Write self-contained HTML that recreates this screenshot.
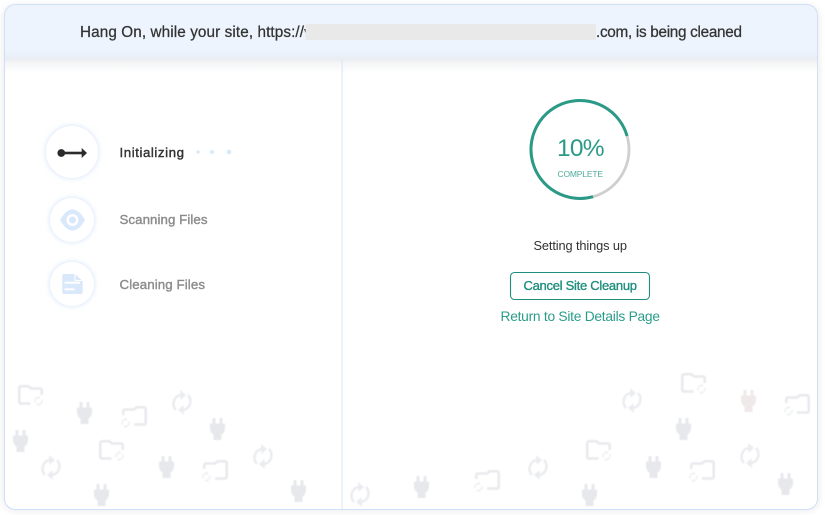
<!DOCTYPE html>
<html><head><meta charset="utf-8"><title>Site Cleanup</title>
<style>
html,body{margin:0;padding:0;background:#fff;width:825px;height:515px;overflow:hidden}
svg{display:block}
text{font-family:"Liberation Sans",Arial,sans-serif}
.c{filter:drop-shadow(0 0 3px rgba(170,200,240,.55))}
</style></head><body>
<svg width="825" height="515" viewBox="0 0 825 515" xmlns="http://www.w3.org/2000/svg">
<defs>
<filter id="ps" x="-5%" y="-5%" width="110%" height="110%"><feGaussianBlur stdDeviation="4"/></filter>
<filter id="soft" x="0" y="0" width="825" height="515" filterUnits="userSpaceOnUse"><feGaussianBlur stdDeviation=".4"/></filter>
<linearGradient id="sh" x1="0" y1="0" x2="0" y2="1"><stop offset="0" stop-color="#e9ebef"/><stop offset=".35" stop-color="#f5f6f7"/><stop offset="1" stop-color="#fff"/></linearGradient>
<linearGradient id="hb" x1="0" y1="0" x2="0" y2="1"><stop offset="0" stop-color="#edf4fd"/><stop offset="1" stop-color="#e9eef6"/></linearGradient>
<clipPath id="pc"><rect x="4.500" y="4.500" width="813" height="505" rx="11"/></clipPath>
<g id="plug" fill="#e7e8ec">
<rect x="2.500" y="0" width="3" height="7"/><rect x="9.500" y="0" width="3" height="7"/>
<path d="M0 5.500H15V9.500C15 13.500 13.500 15.500 11.500 16.500V22H3.500V16.500C1.500 15.500 0 13.500 0 9.500Z"/>
</g>
<g id="sync" fill="none" stroke="#ebecf0" stroke-width="2.500">
<path d="M4 20C-1 14.500 2 6 9 5"/>
<path d="M16 5C21 10.500 18 19 11 20"/>
<path d="M8 0L14 5L8.500 10Z" fill="#ebecf0" stroke="none"/>
<path d="M12 25L6 20L11.500 15Z" fill="#ebecf0" stroke="none"/>
</g>
<g id="mini" fill="none" stroke="#eef0f2" stroke-width="1.500">
<path d="M-3.200 1.500C-4.300-1.500-2-3.600.3-3.600"/>
<path d="M3.200-1.500C4.300 1.500 2 3.600-.3 3.600"/>
<path d="M-.3-5.600L2.200-3.600L-.3-1.600Z" fill="#eef0f2" stroke="none"/>
<path d="M.3 5.600L-2.200 3.600L.3 1.600Z" fill="#eef0f2" stroke="none"/>
</g>
<g id="folder">
<path d="M12.500 18.500H3Q1.300 18.500 1.300 16.500V3Q1.300 1.300 3 1.300H10.500L13 3.500H22Q23.700 3.500 23.700 5.500V10" fill="none" stroke="#e9eaee" stroke-width="2.600"/>
<use href="#mini" x="20.500" y="16"/>
</g>
<g id="folder2">
<path d="M13 18.500H23Q24.700 18.500 24.700 16.500V3Q24.700 1.300 23 1.300H15.500L13 3.500H4Q2.300 3.500 2.300 5.500V9" fill="none" stroke="#e9eaee" stroke-width="2.600"/>
<use href="#mini" x="4.500" y="17"/>
</g>
</defs>

<!-- panel -->
<rect x="4" y="6" width="814" height="504" rx="11" fill="#000" opacity=".1" filter="url(#ps)"/>
<rect x="4.500" y="4.500" width="813" height="505" rx="11" fill="#fff"/>
<g clip-path="url(#pc)">
<rect x="0" y="58" width="825" height="15" fill="url(#sh)"/>
<rect x="0" y="0" width="825" height="50" fill="#edf4fd"/>
<rect x="0" y="50" width="825" height="8.500" fill="url(#hb)"/>
<rect x="341.500" y="59" width="1.200" height="452" fill="#dbe8fa"/>
</g>
<rect x="4.500" y="4.500" width="813" height="505" rx="11" fill="none" stroke="#cfe0f8" stroke-width="1"/>

<!-- header -->
<text x="80" y="37" font-size="15.300" fill="#333" stroke="#333" stroke-width=".25" textLength="224" lengthAdjust="spacing">Hang On, while your site, https://</text>
<text x="304" y="37" font-size="15" fill="#333">v</text>
<rect x="305.500" y="24" width="290.500" height="16" fill="#e9e9e9"/>
<text x="596" y="37" font-size="15.300" fill="#333" stroke="#333" stroke-width=".25" textLength="146" lengthAdjust="spacing">.com, is being cleaned</text>

<!-- steps -->
<circle class="c" cx="72" cy="152" r="26" fill="#fff"/>
<circle cx="61.300" cy="153" r="3.900" fill="#2b2b2b"/>
<rect x="61" y="151.700" width="23" height="2.600" fill="#2b2b2b"/>
<path d="M81.700 148L87 153L81.700 158Z" fill="#2b2b2b"/>
<text x="119.500" y="157" font-size="13.300" fill="#333" stroke="#333" stroke-width=".4" textLength="64.500" lengthAdjust="spacing">Initializing</text>
<circle cx="198" cy="152" r="1.700" fill="#d8e9f8"/>
<circle cx="212" cy="152" r="2" fill="#d8e9f8"/>
<circle cx="229" cy="152" r="2.400" fill="#d8e9f8"/>

<circle class="c" cx="72" cy="220" r="22" fill="#fff"/>
<path d="M60 220Q66 209.500 72.500 209.500Q79 209.500 85 220Q79 230.500 72.500 230.500Q66 230.500 60 220Z" fill="#d9e8fb"/>
<circle cx="72.500" cy="220" r="6" fill="#fff"/>
<circle cx="72.500" cy="220" r="3.500" fill="#d9e8fb"/>
<text x="119.500" y="224" font-size="13.300" fill="#8c8c8c" stroke="#8c8c8c" stroke-width=".4" textLength="88" lengthAdjust="spacing">Scanning Files</text>

<circle class="c" cx="72" cy="284" r="22" fill="#fff"/>
<path d="M64 274H75L82.700 281V292Q82.700 294 80.700 294H64Q62.300 294 62.300 292V276Q62.300 274 64 274Z" fill="#d9e8fb"/>
<path d="M75 273.500V280.500H83" fill="none" stroke="#fff" stroke-width="1"/>
<rect x="64.500" y="281.700" width="15.500" height="2" fill="#fff"/>
<rect x="64.500" y="288.300" width="10" height="2" fill="#fff"/>
<text x="119.500" y="289" font-size="13.300" fill="#8c8c8c" stroke="#8c8c8c" stroke-width=".4" textLength="85.500" lengthAdjust="spacing">Cleaning Files</text>

<!-- progress -->
<circle cx="580" cy="149.500" r="49" fill="none" stroke="#cfcfcf" stroke-width="2.800"/>
<path d="M593 196.700A49 49 0 1 1 627.100 136" fill="none" stroke="#2a9a87" stroke-width="3"/>
<text x="557" y="156" font-size="24.500" fill="#2a9a87" textLength="47.500" lengthAdjust="spacing">10%</text>
<text x="557.500" y="177" font-size="8.500" fill="#4fab9c" textLength="45.500" lengthAdjust="spacing">COMPLETE</text>
<text x="533.500" y="250" font-size="12.800" fill="#333" textLength="93.500" lengthAdjust="spacing">Setting things up</text>
<rect x="510.500" y="272.500" width="139" height="27" rx="4" fill="#fff" stroke="#1f8e7e" stroke-width="1.100"/>
<text x="523.500" y="290" font-size="13" fill="#1f8e7e" stroke="#1f8e7e" stroke-width=".35" textLength="113.500" lengthAdjust="spacing">Cancel Site Cleanup</text>
<text x="500.500" y="321" font-size="13.800" fill="#2a9d8a" textLength="159.500" lengthAdjust="spacing">Return to Site Details Page</text>

<!-- background icons -->
<g filter="url(#soft)">
<use href="#folder" x="18" y="385"/>
<use href="#folder" x="99" y="440"/>
<use href="#folder" x="681" y="373"/>
<use href="#folder" x="586" y="440"/>
<use href="#folder2" x="121" y="406"/>
<use href="#folder2" x="202" y="460"/>
<use href="#folder2" x="474" y="470"/>
<use href="#folder2" x="784" y="394"/>
<use href="#folder2" x="689" y="460"/>
<use href="#plug" x="77" y="402"/>
<use href="#plug" x="13" y="430"/>
<use href="#plug" x="94" y="484"/>
<use href="#plug" x="159" y="456"/>
<use href="#plug" x="210" y="418"/>
<use href="#plug" x="291" y="480"/>
<use href="#plug" x="414" y="476"/>
<use href="#plug" x="582" y="484"/>
<use href="#plug" x="646" y="456"/>
<use href="#plug" x="676" y="418"/>
<g transform="translate(741 390)"><g fill="#efe9ea"><rect x="2.500" y="0" width="3" height="7"/><rect x="9.500" y="0" width="3" height="7"/><path d="M0 5.500H15V9.500C15 13.500 13.500 15.500 11.500 16.500V22H3.500V16.500C1.500 15.500 0 13.500 0 9.500Z"/></g></g>
<use href="#plug" x="778" y="473"/>
<use href="#sync" x="41" y="455"/>
<use href="#sync" x="172" y="390"/>
<use href="#sync" x="253" y="444"/>
<use href="#sync" x="350" y="482"/>
<use href="#sync" x="528" y="455"/>
<use href="#sync" x="622" y="388"/>
<use href="#sync" x="740" y="443"/>
</g>
</svg>
</body></html>
